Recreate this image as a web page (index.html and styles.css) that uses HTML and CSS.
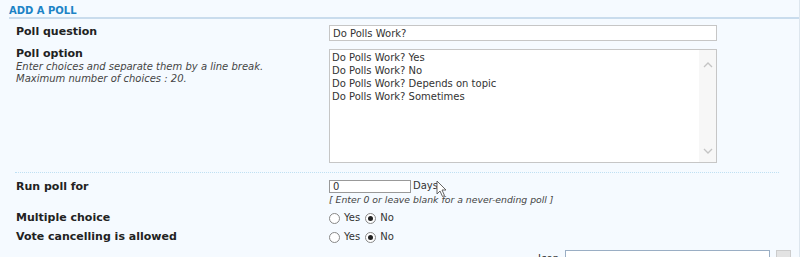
FILE: index.html
```html
<!DOCTYPE html>
<html lang="en">
<head>
    <meta charset="UTF-8">
    <title>Add a poll</title>
    <link rel="stylesheet" href="styles.css">
</head>
<body>
    <div class="panel">
        <h3 class="panel-title">Add a poll</h3>
        <dl class="field first">
            <dt><label>Poll question</label></dt>
            <dd><input type="text" class="text-input wide" value="Do Polls Work?"></dd>
        </dl>
        <dl class="field">
            <dt>
                <label>Poll option</label>
                <span class="explain">Enter choices and separate them by a line break.<br>Maximum number of choices : 20.</span>
            </dt>
            <dd>
                <div class="options-box">
                    <div class="options-text">Do Polls Work? Yes<br>Do Polls Work? No<br>Do Polls Work? Depends on topic<br>Do Polls Work? Sometimes</div>
                    <div class="scroll-track">
                        <svg width="10" height="6" viewBox="0 0 10 6"><path d="M1 5 L5 1 L9 5" fill="none" stroke="#c4c4c4" stroke-width="1.3"/></svg>
                        <svg width="10" height="6" viewBox="0 0 10 6"><path d="M1 1 L5 5 L9 1" fill="none" stroke="#c4c4c4" stroke-width="1.3"/></svg>
                    </div>
                </div>
            </dd>
        </dl>
        <hr class="dashed">
        <dl class="field run">
            <dt><label>Run poll for</label></dt>
            <dd>
                <input type="text" class="text-input days" value="0"><span class="unit">Days</span>
                <span class="cursor"><svg width="12" height="18" viewBox="0 0 12 18"><path d="M1 1 L1 14 L4 11 L6.5 16.5 L8.5 15.5 L6 10 L10 10 Z" fill="#fff" stroke="#555" stroke-width="0.9"/></svg></span>
                <div class="hint">[ Enter 0 or leave blank for a never-ending poll ]</div>
            </dd>
        </dl>
        <dl class="field tight">
            <dt><label>Multiple choice</label></dt>
            <dd class="radios">
                <span class="radio"></span>Yes<span class="radio on"></span>No
            </dd>
        </dl>
        <dl class="field tight">
            <dt><label>Vote cancelling is allowed</label></dt>
            <dd class="radios">
                <span class="radio"></span>Yes<span class="radio on"></span>No
            </dd>
        </dl>
        <div class="cut-row">
            <span class="cut-label">Icon</span>
            <span class="cut-input"></span>
            <span class="cut-btn"></span>
        </div>
    </div>
</body>
</html>
```

FILE: styles.css
```css
body {
    margin: 0;
    background-color: #f5faff;
    font-family: "DejaVu Sans", Verdana, sans-serif;
    font-size: 11px;
    color: #333;
    overflow: hidden;
}
.panel {
    padding: 5px 0 0 9px;
    height: 257px;
    border-right: 1px solid #dde6ee;
    box-sizing: border-box;
}
.panel-title {
    margin: 0;
    padding-bottom: 1px;
    border-bottom: 2px solid #c9dced;
    color: #1c83c6;
    font-size: 10px;
    font-weight: bold;
    text-transform: uppercase;
    line-height: 11px;
}
.field {
    display: flex;
    margin: 6px 0 0 0;
    padding-left: 7px;
}
.field dt {
    width: 313px;
    flex-shrink: 0;
}
.field dd {
    margin: 0;
    flex: 1;
    position: relative;
}
.field label {
    display: block;
    font-weight: bold;
    color: #222;
    line-height: 14px;
}
.explain {
    display: block;
    font-style: italic;
    color: #444;
    line-height: 12px;
    font-size: 10px;
}
.text-input {
    font-family: "DejaVu Sans", Verdana, sans-serif;
    font-size: 10px;
    color: #333;
    background: #fff;
    border: 1px solid #c6c6c6;
    padding: 2px 3px;
    height: 16px;
    box-sizing: border-box;
    margin: 0;
}
.wide {
    width: 388px;
}
.options-box {
    display: flex;
    width: 388px;
    height: 114px;
    margin-top: 2px;
    background: #fff;
    border: 1px solid #c6c6c6;
    box-sizing: border-box;
}
.options-text {
    flex: 1;
    padding: 1px 2px;
    font-size: 10px;
    line-height: 13px;
    color: #333;
}
.scroll-track {
    width: 17px;
    background: #f7f7f7;
    display: flex;
    flex-direction: column;
    justify-content: space-between;
    align-items: center;
    padding: 12px 0 8px;
}
.dashed {
    border: 0;
    border-top: 1px dotted #bfe0f3;
    margin: 9px 20px 0 6px;
}
.field.run {
    margin-top: 7px;
}
.field .days {
    width: 82px;
    height: 13px;
    padding: 0 3px;
    border-color: #999;
    vertical-align: top;
}
.unit {
    font-size: 10px;
    vertical-align: top;
    line-height: 12px;
    margin-left: 2px;
}
.cursor {
    position: absolute;
    left: 107px;
    top: 0;
}
.hint {
    font-size: 9.3px;
    font-style: italic;
    color: #444;
    line-height: 13px;
}
.field.tight {
    margin-top: 5px;
}
.radios {
    font-size: 10px;
    display: flex;
    align-items: center;
    gap: 4px;
    line-height: 14px;
}
.radios .on {
    margin-left: 1px;
}
.radio {
    display: inline-block;
    width: 9px;
    height: 9px;
    border: 1px solid #888;
    border-radius: 50%;
    background: #fff;
    position: relative;
}
.radio.on::after {
    content: "";
    position: absolute;
    left: 2px;
    top: 2px;
    width: 5px;
    height: 5px;
    border-radius: 50%;
    background: #222;
}
.cut-row {
    display: flex;
    align-items: flex-start;
    margin-top: 6px;
    padding-left: 507px;
    gap: 6px;
}
.cut-label {
    font-size: 10px;
    color: #333;
    width: 43px;
    text-align: right;
    padding-top: 3px;
}
.cut-input {
    width: 205px;
    height: 10px;
    border: 1px solid #9aaec4;
    background: #fff;
    box-sizing: border-box;
}
.cut-btn {
    width: 15px;
    height: 10px;
    background: #e3e3e3;
    border: 1px solid #ccc;
    box-sizing: border-box;
}
```
